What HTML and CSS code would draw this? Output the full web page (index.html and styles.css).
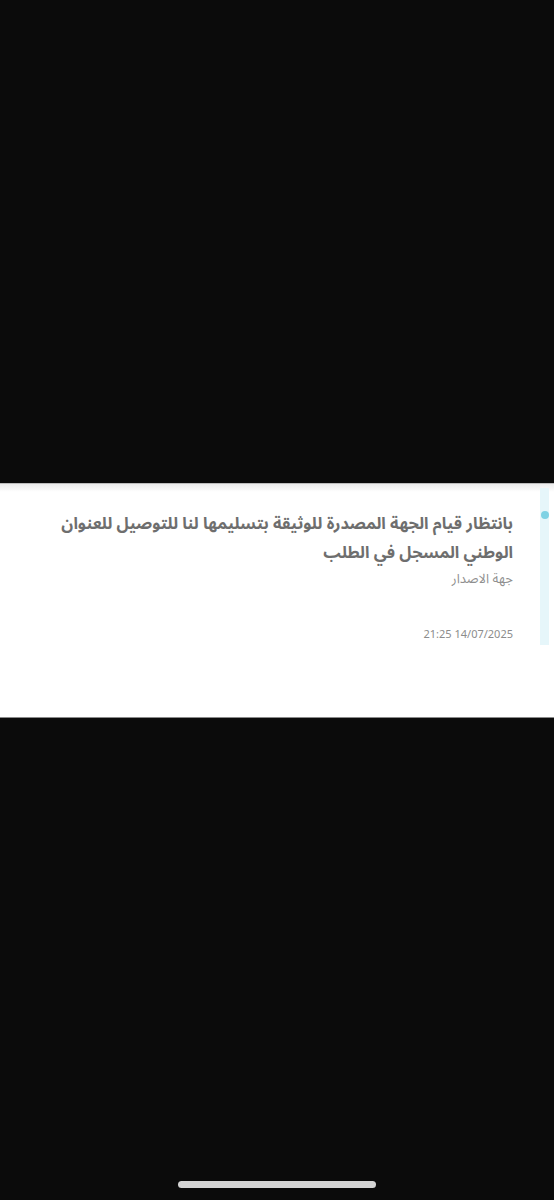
FILE: index.html
```html
<!DOCTYPE html>
<html lang="ar">
<head>
<meta charset="utf-8">
<link rel="stylesheet" href="styles.css">
</head>
<body>
<div class="screen">
  <div class="top-space"></div>
  <section class="panel">
    <div class="rail"><span class="dot"></span></div>
    <div class="content">
      <h2 class="title">بانتظار قيام الجهة المصدرة للوثيقة بتسليمها لنا للتوصيل للعنوان الوطني المسجل في الطلب</h2>
      <p class="source">جهة الاصدار</p>
      <p class="date">21:25 14/07/2025</p>
    </div>
  </section>
  <div class="bottom">
    <div class="home-bar"></div>
  </div>
</div>
</body>
</html>
```

FILE: styles.css
```css
html, body {
  margin: 0;
  padding: 0;
  background: #0b0b0b;
}
.screen {
  width: 554px;
  height: 1200px;
  display: flex;
  flex-direction: column;
  background: #0b0b0b;
}
.top-space {
  height: 483px;
  flex: none;
}
.panel {
  flex: none;
  height: 235px;
  box-sizing: border-box;
  background: linear-gradient(#ececec 0, #ffffff 8px);
  border-top: 1px solid #bdbdbd;
  border-bottom: 1px solid #8a8a8a;
  direction: rtl;
  display: flex;
  align-items: flex-start;
  padding: 4px 5px 0 0;
  font-family: "Noto Sans Arabic", "Noto Sans", "DejaVu Sans", sans-serif;
}
.rail {
  width: 9px;
  height: 157px;
  background: #e6f6fa;
  display: flex;
  justify-content: center;
  padding-top: 23px;
  box-sizing: border-box;
  flex: none;
}
.dot {
  width: 8px;
  height: 8px;
  border-radius: 50%;
  background: #7fd2e4;
}
.content {
  margin-right: 27px;
  padding-top: 21px;
  max-width: 470px;
  text-align: right;
}
.title {
  margin: 0;
  font-size: 16.4px;
  line-height: 29px;
  font-weight: 700;
  color: #6e6e6e;
}
.source {
  margin: 2px 0 0;
  font-size: 13px;
  line-height: 20px;
  color: #8f8f8f;
}
.date {
  margin: 36px 0 0;
  font-size: 11px;
  line-height: 20px;
  color: #8c8c8c;
  direction: ltr;
  text-align: right;
}
.bottom {
  flex: 1;
  display: flex;
  justify-content: center;
  padding-top: 463px;
  box-sizing: border-box;
}
.home-bar {
  width: 198px;
  height: 7px;
  border-radius: 4px;
  background: #d4d4d4;
}
```
